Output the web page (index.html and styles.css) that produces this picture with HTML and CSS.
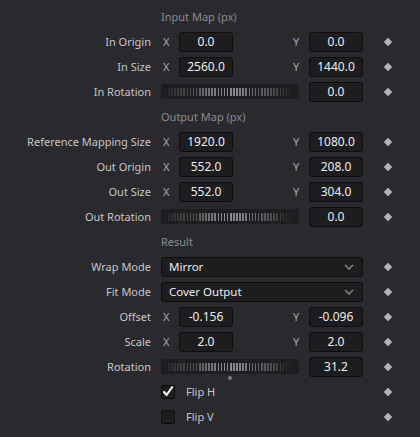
FILE: index.html
```html
<!DOCTYPE html>
<html>
<head>
<meta charset="utf-8">
<link rel="stylesheet" href="styles.css">
</head>
<body>
<div class="panel">
  <div class="row header"><span></span><span class="htext">Input Map (px)</span><span></span></div>

  <div class="row"><span class="label">In Origin</span>
    <div class="xy"><span class="axis">X</span><span class="field">0.0</span><span></span><span class="axis">Y</span><span class="field">0.0</span></div>
    <span class="kf"><i class="diamond"></i></span></div>

  <div class="row"><span class="label">In Size</span>
    <div class="xy"><span class="axis">X</span><span class="field">2560.0</span><span></span><span class="axis">Y</span><span class="field">1440.0</span></div>
    <span class="kf"><i class="diamond"></i></span></div>

  <div class="row"><span class="label">In Rotation</span>
    <div class="rot"><div class="slider"><div class="ticks"></div></div><span class="field">0.0</span></div>
    <span class="kf"><i class="diamond"></i></span></div>

  <div class="row header"><span></span><span class="htext">Output Map (px)</span><span></span></div>

  <div class="row"><span class="label">Reference Mapping Size</span>
    <div class="xy"><span class="axis">X</span><span class="field">1920.0</span><span></span><span class="axis">Y</span><span class="field">1080.0</span></div>
    <span class="kf"><i class="diamond"></i></span></div>

  <div class="row"><span class="label">Out Origin</span>
    <div class="xy"><span class="axis">X</span><span class="field">552.0</span><span></span><span class="axis">Y</span><span class="field">208.0</span></div>
    <span class="kf"><i class="diamond"></i></span></div>

  <div class="row"><span class="label">Out Size</span>
    <div class="xy"><span class="axis">X</span><span class="field">552.0</span><span></span><span class="axis">Y</span><span class="field">304.0</span></div>
    <span class="kf"><i class="diamond"></i></span></div>

  <div class="row"><span class="label">Out Rotation</span>
    <div class="rot"><div class="slider"><div class="ticks"></div></div><span class="field">0.0</span></div>
    <span class="kf"><i class="diamond"></i></span></div>

  <div class="row header"><span></span><span class="htext">Result</span><span></span></div>

  <div class="row"><span class="label">Wrap Mode</span>
    <div class="select"><span>Mirror</span>
      <svg class="chev" width="10" height="6" viewBox="0 0 10 6"><path d="M1 1 L5 5 L9 1" fill="none" stroke="#8c8c90" stroke-width="1.3"/></svg></div>
    <span class="kf"><i class="diamond"></i></span></div>

  <div class="row"><span class="label">Fit Mode</span>
    <div class="select"><span>Cover Output</span>
      <svg class="chev" width="10" height="6" viewBox="0 0 10 6"><path d="M1 1 L5 5 L9 1" fill="none" stroke="#8c8c90" stroke-width="1.3"/></svg></div>
    <span class="kf"><i class="diamond"></i></span></div>

  <div class="row"><span class="label">Offset</span>
    <div class="xy"><span class="axis">X</span><span class="field">-0.156</span><span></span><span class="axis">Y</span><span class="field">-0.096</span></div>
    <span class="kf"><i class="diamond"></i></span></div>

  <div class="row"><span class="label">Scale</span>
    <div class="xy"><span class="axis">X</span><span class="field">2.0</span><span></span><span class="axis">Y</span><span class="field">2.0</span></div>
    <span class="kf"><i class="diamond"></i></span></div>

  <div class="row"><span class="label">Rotation</span>
    <div class="rot"><div class="slider"><div class="ticks"></div><i class="dot"></i></div><span class="field">31.2</span></div>
    <span class="kf"><i class="diamond"></i></span></div>

  <div class="row"><span></span>
    <label class="check"><span class="box checked"><svg width="13" height="13" viewBox="0 0 13 13"><path d="M2.2 7 L5 10.3 L11 1.8" fill="none" stroke="#f4f4f4" stroke-width="2.3" stroke-linejoin="round" stroke-linecap="round"/></svg></span><span class="ctext">Flip H</span></label>
    <span class="kf"><i class="diamond"></i></span></div>

  <div class="row"><span></span>
    <label class="check"><span class="box"></span><span class="ctext">Flip V</span></label>
    <span class="kf"><i class="diamond"></i></span></div>
</div>
</body>
</html>
```

FILE: styles.css
```css
html, body {
  margin: 0;
  padding: 0;
  background: #29292e;
}
body {
  font-family: "Noto Sans", "Open Sans", sans-serif;
  font-size: 11px;
  color: #c9c9cc;
}
.panel {
  width: 420px;
  height: 437px;
  padding-top: 4px;
  box-sizing: border-box;
}
.row {
  display: grid;
  grid-template-columns: 151px 10px 202px 57px;
  height: 25px;
  align-items: center;
}
.row > :nth-child(1) { grid-column: 1; }
.row > :nth-child(2) { grid-column: 3; }
.row > :nth-child(3) { grid-column: 4; }
.label {
  text-align: right;
  white-space: nowrap;
  color: #c6c6c9;
}
.htext {
  color: #8b8b8f;
}
.xy {
  display: grid;
  grid-template-columns: 18px 54px 1fr 18px 54px;
  align-items: center;
  height: 20px;
}
.axis {
  color: #a9a9ad;
  padding-left: 2px;
}
.field {
  height: 20px;
  box-sizing: border-box;
  background: #1d1d1f;
  border: 1px solid #0d0d0e;
  border-radius: 3px;
  color: #ececee;
  text-align: center;
  line-height: 18px;
  font-size: 12px;
}
.rot {
  display: grid;
  grid-template-columns: 138px 1fr 54px;
  align-items: center;
}
.rot .field { grid-column: 3; }
.slider {
  position: relative;
  height: 15px;
  background: #1e1e21;
  display: flex;
  align-items: center;
  justify-content: center;
}
.ticks {
  width: 124px;
  height: 8px;
  background: repeating-linear-gradient(90deg, #8a8a8e 0 1.6px, transparent 1.6px 3.1px);
  -webkit-mask-image: linear-gradient(90deg, rgba(0,0,0,0.1), rgba(0,0,0,1) 45%, rgba(0,0,0,1) 55%, rgba(0,0,0,0.1));
  mask-image: linear-gradient(90deg, rgba(0,0,0,0.1), rgba(0,0,0,1) 45%, rgba(0,0,0,1) 55%, rgba(0,0,0,0.1));
}
.dot {
  position: absolute;
  left: 67px;
  top: 17px;
  width: 4px;
  height: 4px;
  border-radius: 50%;
  background: #7c7c80;
}
.kf {
  display: flex;
  align-items: center;
  padding-left: 22px;
}
.diamond {
  display: block;
  width: 6px;
  height: 6px;
  background: #b4b4b8;
  transform: rotate(45deg);
}
.select {
  height: 20px;
  box-sizing: border-box;
  background: #1d1d1f;
  border: 1px solid #0d0d0e;
  border-radius: 3px;
  display: flex;
  align-items: center;
  justify-content: space-between;
  padding: 0 8px 0 7px;
  color: #ececee;
  font-size: 11.5px;
}
.chev { display: block; }
.check {
  display: flex;
  align-items: center;
}
.box {
  width: 14px;
  height: 14px;
  box-sizing: border-box;
  background: #1d1d1f;
  border: 1px solid #0d0d0e;
  border-radius: 2px;
  display: flex;
  align-items: center;
  justify-content: center;
}
.ctext {
  margin-left: 11px;
  color: #c6c6c9;
}
```
